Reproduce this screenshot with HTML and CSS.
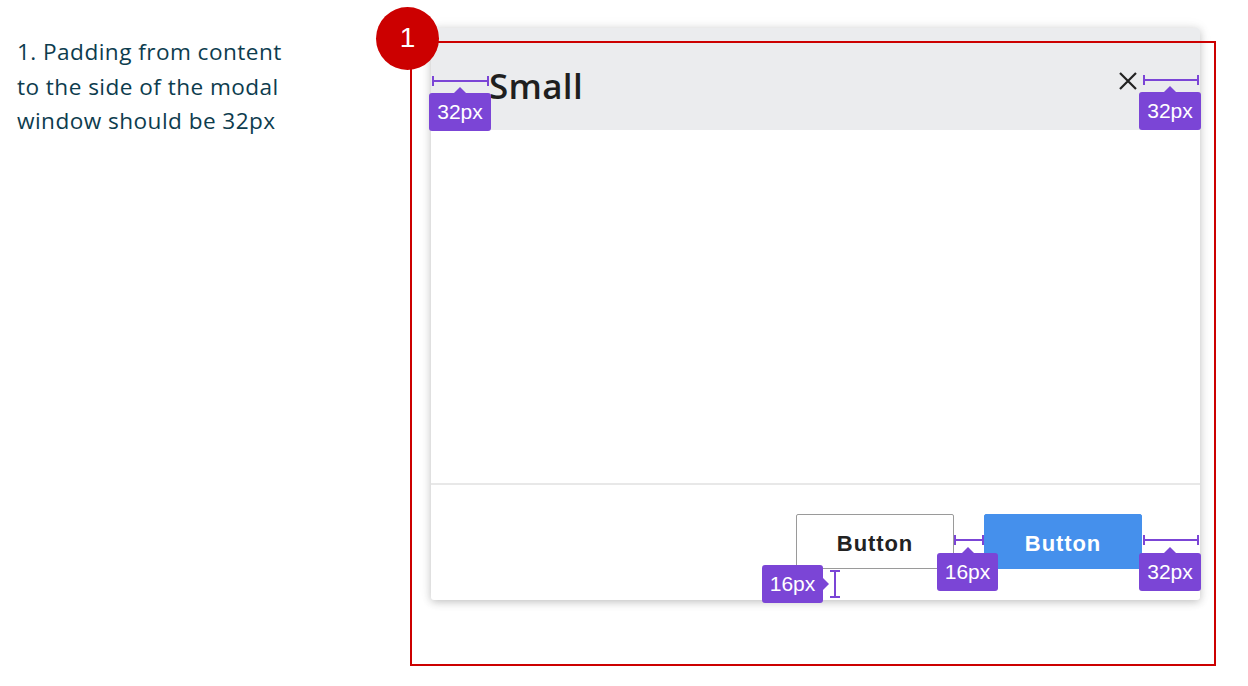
FILE: index.html
```html
<!DOCTYPE html>
<html lang="en">
<head>
<meta charset="utf-8">
<title>Modal padding</title>
<link rel="stylesheet" href="styles.css">
</head>
<body>
<div class="page">
  <aside class="note">
    <p>1. Padding from content to the side of the modal window should be 32px</p>
  </aside>
  <section class="stage">
    <div class="modal">
      <header class="modal-head">
        <h1 class="modal-title">Small</h1>
        <button class="close" aria-label="Close">
          <svg width="20" height="18" viewBox="0 0 20 18"><path d="M2 1 L18 17 M18 1 L2 17" stroke="#222" stroke-width="2.2" fill="none"/></svg>
        </button>
      </header>
      <div class="modal-body"></div>
      <footer class="modal-foot">
        <button class="btn btn-secondary">Button</button>
        <button class="btn btn-primary">Button</button>
      </footer>

      <span class="hline m-tl"></span>
      <span class="tag tag-up t-tl">32px</span>
      <span class="hline m-tr"></span>
      <span class="tag tag-up t-tr">32px</span>
      <span class="hline m-gap"></span>
      <span class="tag tag-up t-gap">16px</span>
      <span class="hline m-br"></span>
      <span class="tag tag-up t-br">32px</span>
      <span class="vline m-bottom"></span>
      <span class="tag tag-right t-bottom">16px</span>
    </div>
    <div class="frame"></div>
    <div class="badge">1</div>
  </section>
</div>
</body>
</html>
```

FILE: styles.css
```css
* { box-sizing: border-box; }
html, body { margin: 0; padding: 0; background: #ffffff; }
body { width: 1248px; height: 686px; overflow: hidden; }

.page {
  display: flex;
  align-items: flex-start;
}

.note {
  width: 410px;
  padding: 35px 0 0 17px;
}
.note p {
  margin: 0;
  width: 280px;
  font-family: "Open Sans", "Noto Sans", sans-serif;
  font-size: 22.6px;
  letter-spacing: 0.45px;
  line-height: 34.5px;
  color: #0d3c4e;
}

.stage {
  position: relative;
  width: 808px;
  height: 686px;
  padding: 28px 0 0 21px;
}

.modal {
  position: relative;
  width: 769px;
  height: 572px;
  background: #ffffff;
  border-radius: 3px;
  box-shadow: 0 2px 8px rgba(0,0,0,0.22), 0 0 16px rgba(0,0,0,0.05);
  display: flex;
  flex-direction: column;
}

.modal-head {
  height: 102px;
  background: #ebecee;
  border-radius: 3px 3px 0 0;
  display: flex;
  align-items: center;
  justify-content: space-between;
  padding: 12px 62px 0 58px;
}
.modal-title {
  margin: 0;
  font-family: "Open Sans", "Noto Sans", sans-serif;
  font-weight: 600;
  font-size: 35px;
  color: #1f1f1f;
  letter-spacing: 0.3px;
}
.close {
  border: 0;
  background: none;
  padding: 0;
  margin-top: -8px;
  width: 20px;
  height: 18px;
  display: flex;
}

.modal-body {
  flex: 1;
  border-bottom: 2px solid #e8e8e8;
}

.modal-foot {
  height: 115px;
  display: flex;
  justify-content: flex-end;
  align-items: flex-start;
  gap: 30px;
  padding: 29px 58px 0 0;
}

.btn {
  width: 158px;
  height: 55px;
  font-family: "Liberation Sans", Arial, sans-serif;
  font-weight: 700;
  font-size: 22px;
  letter-spacing: 0.9px;
  border-radius: 2px;
  padding: 5px 0 0 0;
}
.btn-secondary {
  background: #ffffff;
  border: 1px solid #9a9a9a;
  color: #222222;
}
.btn-primary {
  background: #4590ec;
  border: 1px solid #4590ec;
  color: #ffffff;
}

/* measurement annotations */
.hline, .vline {
  position: absolute;
  background: #7b45d6;
}
.hline { height: 2px; }
.hline::before, .hline::after {
  content: "";
  position: absolute;
  top: -4px;
  width: 2px;
  height: 10px;
  background: #7b45d6;
}
.hline::before { left: 0; }
.hline::after { right: 0; }

.vline { width: 2px; }
.vline::before, .vline::after {
  content: "";
  position: absolute;
  left: -4px;
  width: 10px;
  height: 2px;
  background: #7b45d6;
}
.vline::before { top: 0; }
.vline::after { bottom: 0; }

.tag {
  position: absolute;
  width: 62px;
  height: 38px;
  background: #7b45d6;
  border-radius: 3px;
  color: #ffffff;
  font-family: "Liberation Sans", Arial, sans-serif;
  font-size: 21px;
  display: flex;
  align-items: center;
  justify-content: center;
}
.tag-up::before {
  content: "";
  position: absolute;
  top: -6px;
  left: 50%;
  margin-left: -6px;
  border-left: 6px solid transparent;
  border-right: 6px solid transparent;
  border-bottom: 6px solid #7b45d6;
}
.tag-right::after {
  content: "";
  position: absolute;
  right: -6px;
  top: 50%;
  margin-top: -6px;
  border-top: 6px solid transparent;
  border-bottom: 6px solid transparent;
  border-left: 6px solid #7b45d6;
}

.m-tl { left: 1px; top: 52px; width: 57px; }
.t-tl { left: -2px; top: 65px; }
.m-tr { left: 712px; top: 51px; width: 56px; }
.t-tr { left: 708px; top: 64px; }
.m-gap { left: 523px; top: 511px; width: 30px; }
.t-gap { left: 506px; top: 525px; width: 61px; }
.m-br { left: 712px; top: 511px; width: 56px; }
.t-br { left: 708px; top: 525px; }
.m-bottom { left: 403px; top: 542px; height: 28px; }
.t-bottom { left: 331px; top: 537px; width: 61px; }

.frame {
  position: absolute;
  left: 0;
  top: 41px;
  width: 806px;
  height: 625px;
  border: 2px solid #cc0000;
}

.badge {
  position: absolute;
  left: -34px;
  top: 7px;
  width: 63px;
  height: 63px;
  border-radius: 50%;
  background: #cc0000;
  color: #ffffff;
  font-family: "Liberation Sans", Arial, sans-serif;
  font-size: 28px;
  display: flex;
  align-items: center;
  justify-content: center;
  padding-bottom: 2px;
}
```
